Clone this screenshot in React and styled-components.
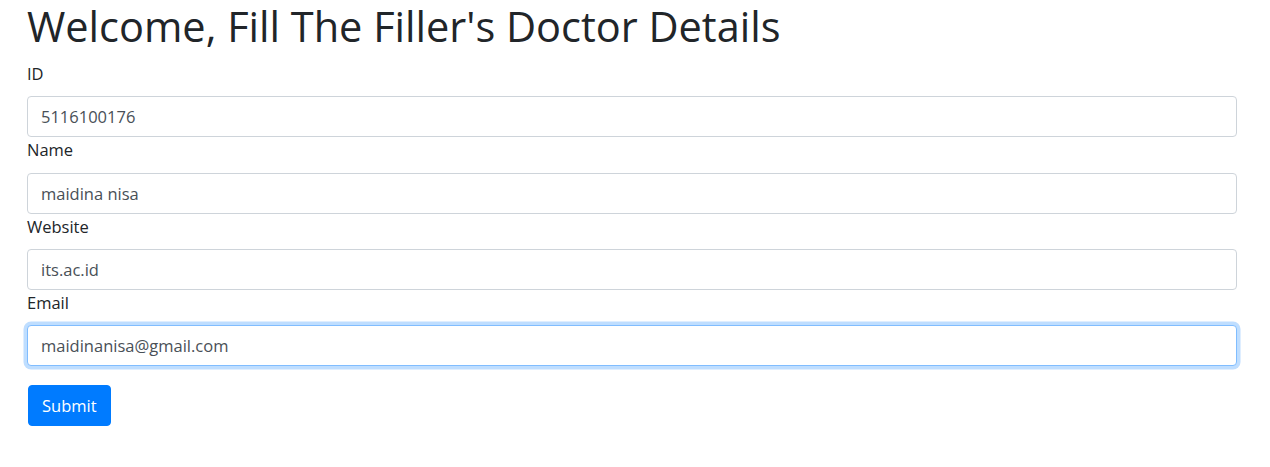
import React from "react";
import styled, { createGlobalStyle } from "styled-components";

const GlobalStyle = createGlobalStyle`
  body {
    margin: 0;
    background: #ffffff;
    font-family: "Open Sans", "Noto Sans", sans-serif;
    color: #212529;
  }
  * {
    box-sizing: border-box;
  }
`;

const Page = styled.div`
  padding: 0 33px 0 27px;
`;

const Title = styled.h1`
  margin: 0 0 8px;
  font-size: 41.5px;
  font-weight: 400;
  line-height: 53px;
  color: #212529;
`;

const Form = styled.form`
  display: flex;
  flex-direction: column;
`;

const Label = styled.label`
  display: block;
  margin-bottom: 9px;
  font-size: 16.5px;
  line-height: 26.3px;
`;

const Input = styled.input`
  display: block;
  width: 100%;
  height: 41px;
  padding: 6px 13px;
  font-family: inherit;
  font-size: 16.5px;
  color: #495057;
  background: #ffffff;
  border: 1px solid ${(props) => (props.$focused ? "#80bdff" : "#ced4da")};
  border-radius: 4px;
  outline: none;
  box-shadow: ${(props) =>
    props.$focused ? "0 0 0 3.5px rgba(0, 123, 255, 0.25)" : "none"};
  margin-bottom: ${(props) => (props.$last ? "19px" : "0")};
`;

const Button = styled.button`
  align-self: flex-start;
  margin-left: 1px;
  height: 41px;
  padding: 0 13px;
  font-family: inherit;
  font-size: 16.5px;
  color: #ffffff;
  background: #007bff;
  border: 1px solid #007bff;
  border-radius: 4px;
  cursor: pointer;
`;

const fields = [
  { id: "id", label: "ID", value: "5116100176" },
  { id: "name", label: "Name", value: "maidina nisa" },
  { id: "website", label: "Website", value: "its.ac.id" },
  { id: "email", label: "Email", value: "maidinanisa@gmail.com", focused: true },
];

export default function App() {
  return (
    <Page>
      <GlobalStyle />
      <Title>Welcome, Fill The Filler's Doctor Details</Title>
      <Form onSubmit={(e) => e.preventDefault()}>
        {fields.map((f, i) => (
          <React.Fragment key={f.id}>
            <Label htmlFor={f.id}>{f.label}</Label>
            <Input
              id={f.id}
              defaultValue={f.value}
              $focused={f.focused}
              $last={i === fields.length - 1}
            />
          </React.Fragment>
        ))}
        <Button type="submit">Submit</Button>
      </Form>
    </Page>
  );
}
